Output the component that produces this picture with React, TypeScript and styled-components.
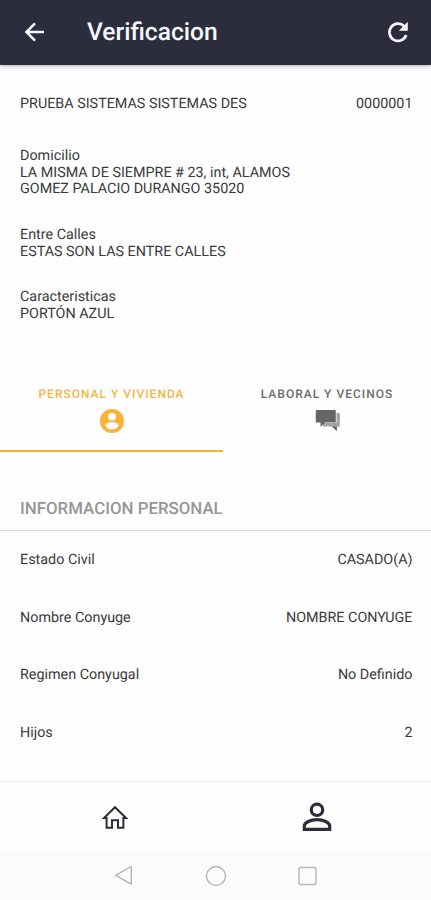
import React from 'react';
import styled, { createGlobalStyle } from 'styled-components';

const GlobalStyle = createGlobalStyle`
  * { box-sizing: border-box; }
  body { margin: 0; background: #fefefe; font-family: Roboto, sans-serif; text-rendering: geometricPrecision; }
  svg { display: block; }
`;

const Screen = styled.div`
  display: flex;
  flex-direction: column;
  width: 431px;
  height: 900px;
  overflow: hidden;
  background: #fefefe;
  color: #3a3a3a;
  font-size: 14.35px;
`;

const Header = styled.header`
  display: flex;
  align-items: center;
  flex: none;
  height: 65px;
  padding: 0 22px 2px 24px;
  background: #2b2d3c;
  color: #f5f7fc;
  box-shadow: 0 1px 4px rgba(30, 30, 50, 0.35);
`;

const Title = styled.h1`
  flex: 1;
  margin: 0 0 0 42px;
  padding-top: 2px;
  font-size: 24.6px;
  line-height: 30px;
  font-weight: 500;
`;

const Details = styled.section`
  flex: none;
  height: 308px;
  padding: 30px 18.5px 0 20px;
`;

const ClientLine = styled.div`
  display: flex;
  justify-content: space-between;
  margin-bottom: 36px;
  line-height: 17px;
`;

const Field = styled.div`
  margin-bottom: 28.8px;
  line-height: 16.7px;
`;

const Tabs = styled.nav`
  display: grid;
  grid-template-columns: 223px 208px;
  flex: none;
  height: 79px;
`;

const Tab = styled.div<{ $active?: boolean }>`
  display: flex;
  flex-direction: column;
  align-items: center;
  gap: 7px;
  padding-top: 14px;
  border-bottom: 2px solid ${(p) => (p.$active ? '#f9b233' : 'transparent')};
  color: ${(p) => (p.$active ? '#f3b643' : '#6c6c6c')};
  font-size: 12px;
  line-height: 14px;
  font-weight: 500;
  letter-spacing: 1px;

  svg { margin-top: 1px; }
`;

const SectionTitle = styled.h2`
  flex: none;
  height: 79px;
  margin: 0;
  padding: 47px 20px 0;
  border-bottom: 1px solid #dedede;
  color: #969696;
  font-size: 16.85px;
  line-height: 21px;
  font-weight: 500;
`;

const Rows = styled.div`
  flex: 1;
`;

const Row = styled.div`
  display: flex;
  align-items: center;
  justify-content: space-between;
  height: 57.5px;
  padding: 0 18.5px 0 20px;
`;

const BottomBar = styled.nav`
  display: grid;
  grid-template-columns: 1fr 1fr;
  align-items: center;
  justify-items: center;
  flex: none;
  height: 71px;
  padding: 0 13px 1px 14px;
  border-top: 1px solid #ececec;
  color: #2b2d3c;
`;

const SystemBar = styled.div`
  display: flex;
  align-items: center;
  justify-content: space-between;
  flex: none;
  height: 48px;
  padding: 0 113px 1px 113px;
  background: #fbfbfb;
`;

const BackArrow = () => (
  <svg width="21" height="20" viewBox="0 0 21 20" fill="none" stroke="currentColor" strokeWidth="2.5">
    <path d="M20 10H3M11 1.4 2.4 10l8.6 8.6" />
  </svg>
);

const Refresh = () => (
  <svg width="22" height="22" viewBox="0 0 22 22">
    <path d="M19.2 14a8.6 8.6 0 1 1-2-8.8" fill="none" stroke="currentColor" strokeWidth="2.7" />
    <path d="M20.8 .8v9h-9z" fill="currentColor" />
  </svg>
);

const Contact = () => (
  <svg width="24" height="24" viewBox="0 0 24 24">
    <circle cx="12" cy="12" r="12" fill="#f9b233" />
    <circle cx="12" cy="7.7" r="3.9" fill="#fefefe" />
    <path d="M5.2 16.7c.4-2.5 4.5-3.8 6.8-3.8s6.4 1.3 6.8 3.8c-1.5 2.4-4 3.8-6.8 3.8s-5.3-1.4-6.8-3.8z" fill="#fefefe" />
  </svg>
);

const Chat = () => (
  <svg width="25" height="24" viewBox="0 0 25 24">
    <path d="M21.5 4H23.5a1.3 1.3 0 0 1 1.3 1.3V17.5h-3v4.5L16.5 17.5H8v-3.5h13.5z" fill="#a2a2a2" />
    <path d="M17 17.5h4.8v4.5z" fill="#656565" />
    <path d="M1.8 1h18a1 1 0 0 1 1 1v11.5H10L5.5 18v-4.5H.8V2a1 1 0 0 1 1-1z" fill="#656565" />
  </svg>
);

const Home = () => (
  <svg width="30" height="26" viewBox="0 0 30 26" fill="none" stroke="currentColor" strokeWidth="2">
    <path d="M4 14H6.6v9.7h5.4v-7.5h6v7.5h5.4V14H26L15 3.2z" />
  </svg>
);

const Person = () => (
  <svg width="30" height="30" viewBox="0 0 30 30" fill="none" stroke="currentColor" strokeWidth="3.2">
    <circle cx="15" cy="7.8" r="5.7" />
    <path d="M2.3 27.3v-3.2c0-3.7 6.5-6.4 12.7-6.4s12.7 2.7 12.7 6.4v3.2z" />
  </svg>
);

const NavBack = () => (
  <svg width="20" height="21" viewBox="0 0 20 21" fill="none" stroke="#b5b5b5" strokeWidth="1.4" strokeLinejoin="round">
    <path d="M18.3 1.5v17.6L2.5 10.3z" />
  </svg>
);

const NavHome = () => (
  <svg width="22" height="22" viewBox="0 0 22 22" fill="none" stroke="#b5b5b5" strokeWidth="1.4">
    <circle cx="11" cy="11" r="9.5" />
  </svg>
);

const NavRecent = () => (
  <svg width="20" height="20" viewBox="0 0 20 20" fill="none" stroke="#b5b5b5" strokeWidth="1.4">
    <rect x="1" y="1.5" width="17" height="17" rx="1.5" />
  </svg>
);

const personalInfo = [
  ['Estado Civil', 'CASADO(A)'],
  ['Nombre Conyuge', 'NOMBRE CONYUGE'],
  ['Regimen Conyugal', 'No Definido'],
  ['Hijos', '2'],
];

export default function App() {
  return (
    <Screen>
      <GlobalStyle />
      <Header>
        <BackArrow />
        <Title>Verificacion</Title>
        <Refresh />
      </Header>
      <Details>
        <ClientLine>
          <span>PRUEBA SISTEMAS SISTEMAS DES</span>
          <span>0000001</span>
        </ClientLine>
        <Field>
          <div>Domicilio</div>
          <div>LA MISMA DE SIEMPRE # 23, int, ALAMOS</div>
          <div>GOMEZ PALACIO DURANGO 35020</div>
        </Field>
        <Field>
          <div>Entre Calles</div>
          <div>ESTAS SON LAS ENTRE CALLES</div>
        </Field>
        <Field>
          <div>Caracteristicas</div>
          <div>PORTÓN AZUL</div>
        </Field>
      </Details>
      <Tabs>
        <Tab $active>
          <span>PERSONAL Y VIVIENDA</span>
          <Contact />
        </Tab>
        <Tab>
          <span>LABORAL Y VECINOS</span>
          <Chat />
        </Tab>
      </Tabs>
      <SectionTitle>INFORMACION PERSONAL</SectionTitle>
      <Rows>
        {personalInfo.map(([label, value]) => (
          <Row key={label}>
            <span>{label}</span>
            <span>{value}</span>
          </Row>
        ))}
      </Rows>
      <BottomBar>
        <Home />
        <Person />
      </BottomBar>
      <SystemBar>
        <NavBack />
        <NavHome />
        <NavRecent />
      </SystemBar>
    </Screen>
  );
}
